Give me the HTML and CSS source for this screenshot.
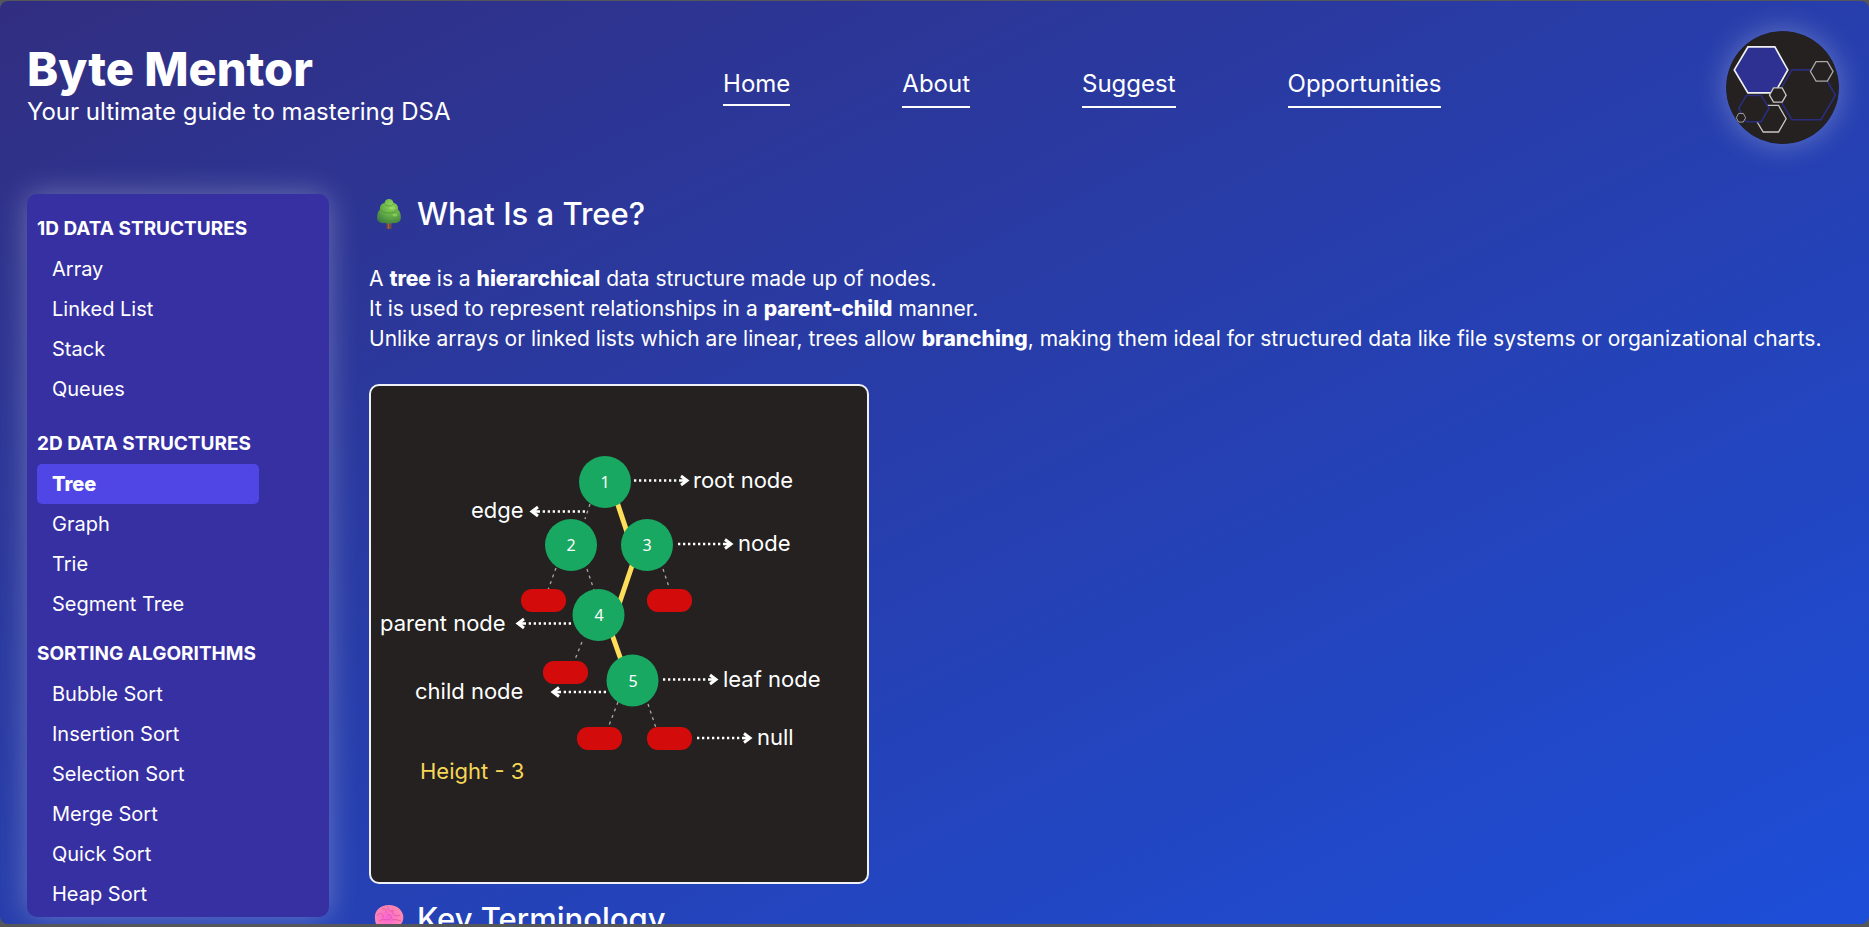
FILE: index.html
```html
<!DOCTYPE html>
<html lang="en">
<head>
<meta charset="utf-8">
<title>Byte Mentor</title>
<link rel="stylesheet" href="styles.css">
</head>
<body>
<div class="app">
  <header class="header">
    <div class="brand">
      <h1 class="brand-name">Byte Mentor</h1>
      <p class="brand-tagline">Your ultimate guide to mastering DSA</p>
    </div>
    <nav class="nav">
      <a class="nav-link nav-link-current" href="#">Home</a>
      <a class="nav-link" href="#">About</a>
      <a class="nav-link" href="#">Suggest</a>
      <a class="nav-link" href="#">Opportunities</a>
    </nav>
    <svg class="logo" viewBox="137 93 340 340" role="img" aria-label="Byte Mentor logo">
      <circle cx="307" cy="263" r="170" fill="#242120"/>
      <g fill="#242120" stroke-width="5">
        <polygon points="335,210 423,210 466,286 423,360 335,360 291,286" stroke="#292d7c"/>
        <polygon points="225,357 249,317 295,317 318,357 295,397 249,397" stroke="#c6c6c4" stroke-width="4"/>
        <polygon points="175,326 198,287 243,287 266,326 243,366 198,366" stroke="#292d7c"/>
        <polygon points="162,210 203,141 284,141 323,210 284,279 203,279" fill="#2e3192" stroke="#f0f0f4"/>
        <polygon points="391,215 408,185 442,185 459,215 442,244 408,244" stroke="#aaa9a8" stroke-width="4"/>
        <polygon points="268,286 280,264 306,264 318,286 306,307 280,307" stroke="#c6c6c4" stroke-width="4"/>
        <polygon points="168,354 175,341 189,341 196,354 189,367 175,367" stroke="#a0a09e" stroke-width="3"/>
      </g>
    </svg>
  </header>

  <div class="layout">
    <aside class="sidebar">
      <div class="menu">
        <section class="menu-group">
          <h2 class="menu-title">1D DATA STRUCTURES</h2>
          <a class="menu-item" href="#">Array</a>
          <a class="menu-item" href="#">Linked List</a>
          <a class="menu-item" href="#">Stack</a>
          <a class="menu-item" href="#">Queues</a>
        </section>
        <section class="menu-group menu-group-spaced">
          <h2 class="menu-title">2D DATA STRUCTURES</h2>
          <a class="menu-item menu-item-active" href="#">Tree</a>
          <a class="menu-item" href="#">Graph</a>
          <a class="menu-item" href="#">Trie</a>
          <a class="menu-item" href="#">Segment Tree</a>
        </section>
        <section class="menu-group">
          <h2 class="menu-title">SORTING ALGORITHMS</h2>
          <a class="menu-item" href="#">Bubble Sort</a>
          <a class="menu-item" href="#">Insertion Sort</a>
          <a class="menu-item" href="#">Selection Sort</a>
          <a class="menu-item" href="#">Merge Sort</a>
          <a class="menu-item" href="#">Quick Sort</a>
          <a class="menu-item" href="#">Heap Sort</a>
        </section>
      </div>
    </aside>

    <main class="content">
      <h2 class="topic">
        <svg class="topic-icon" viewBox="0 0 30 32" aria-hidden="true">
          <defs>
            <radialGradient id="leaf" cx="0.6" cy="0.25" r="0.8">
              <stop offset="0" stop-color="#8fd45a"/>
              <stop offset="0.55" stop-color="#63ad45"/>
              <stop offset="1" stop-color="#3f7d43"/>
            </radialGradient>
          </defs>
          <path d="M12.500 22h5v8.500q-2.500 1-5 0z" fill="#7b4a3c"/>
          <path d="M14.500 24v7" stroke="#9c6350" stroke-width="1"/>
          <path d="M15 1C17.500 1 19 2.500 19.500 5C22.500 5.500 24.500 8 24 11.500C26.500 13.500 27.500 19 26.500 22C25.500 24.500 22 25.500 19.500 25C17 26 13 26 10.500 25C8 25.500 4.500 24.500 3.500 22C2.500 19 3.500 13.500 6 11.500C5.500 8 7.500 5.500 10.500 5C11 2.500 12.500 1 15 1z" fill="url(#leaf)"/>
          <path d="M10.500 6c2 2.500 7 3 9 0M6.500 12c4 4 13 4 17 0" fill="none" stroke="#47903d" stroke-width="1" opacity="0.7"/>
          <ellipse cx="18" cy="10" rx="3" ry="1.500" fill="#a5e56f" opacity="0.6"/>
          <ellipse cx="21" cy="17" rx="2.500" ry="1.500" fill="#a5e56f" opacity="0.5"/>
        </svg>
        What Is a Tree?
      </h2>

      <p class="intro">
        A <strong>tree</strong> is a <strong>hierarchical</strong> data structure made up of nodes.<br>
        It is used to represent relationships in a <strong>parent-child</strong> manner.<br>
        Unlike arrays or linked lists which are linear, trees allow <strong>branching</strong>, making them ideal for structured data like file systems or organizational charts.
      </p>

      <svg class="diagram" viewBox="2 2 496 496" role="img" aria-label="Parts of a tree">
        <defs>
          <g id="arrow">
            <path d="M0 0H46" stroke="#fff" stroke-width="2.600" stroke-dasharray="2.300 2.700"/>
            <path d="M47 -4.500L53 0L47 4.500" fill="none" stroke="#fff" stroke-width="3"/>
            <path d="M46 0H52" stroke="#fff" stroke-width="2.600"/>
          </g>
        </defs>
        <g stroke="#aaa8a6" stroke-width="1.300" stroke-dasharray="3 4">
          <path d="M221 120L216 135"/>
          <path d="M187 184L179 206"/>
          <path d="M218 185L225 206"/>
          <path d="M294 185L301 206"/>
          <path d="M213 258L205 278"/>
          <path d="M249 318L239 344"/>
          <path d="M279 320L287 344"/>
        </g>
        <g stroke="#ffde59" stroke-width="5">
          <path d="M246 112L262 160"/>
          <path d="M266 173L247 229"/>
          <path d="M240 242L257 290"/>
        </g>
        <g fill="#d40b0b">
          <rect x="152" y="205" width="45" height="23" rx="11"/>
          <rect x="278" y="205" width="45" height="23" rx="11"/>
          <rect x="174" y="277" width="45" height="23" rx="11"/>
          <rect x="208" y="343" width="45" height="23" rx="11"/>
          <rect x="278" y="343" width="45" height="23" rx="11"/>
        </g>
        <g fill="#19a861">
          <circle cx="236" cy="98" r="26"/>
          <circle cx="202" cy="161" r="26"/>
          <circle cx="278" cy="161" r="26"/>
          <circle cx="229.500" cy="231" r="26"/>
          <circle cx="263.500" cy="296.500" r="26"/>
        </g>
        <g class="node-number">
          <text x="236" y="104">1</text>
          <text x="202" y="167">2</text>
          <text x="278" y="167">3</text>
          <text x="230" y="237">4</text>
          <text x="264" y="303">5</text>
        </g>
        <use href="#arrow" x="265" y="96.500"/>
        <use href="#arrow" x="309" y="160"/>
        <use href="#arrow" x="294" y="295.500"/>
        <use href="#arrow" x="328" y="354"/>
        <use href="#arrow" transform="translate(216 127.500) rotate(180)"/>
        <use href="#arrow" transform="translate(202 239.500) rotate(180)"/>
        <use href="#arrow" transform="translate(237 308) rotate(180)"/>
        <g class="node-label">
          <text x="324" y="104">root node</text>
          <text x="102" y="134">edge</text>
          <text x="369" y="167">node</text>
          <text x="11" y="247">parent node</text>
          <text x="46" y="315">child node</text>
          <text x="354" y="303">leaf node</text>
          <text x="388" y="361">null</text>
          <text class="height-label" x="51" y="395">Height - 3</text>
        </g>
      </svg>

      <h2 class="topic">
        <svg class="topic-icon" viewBox="0 0 30 32" aria-hidden="true">
          <defs>
            <radialGradient id="brain" cx="0.45" cy="0.5" r="0.6">
              <stop offset="0" stop-color="#fb62d8"/>
              <stop offset="1" stop-color="#ff8fa8"/>
            </radialGradient>
          </defs>
          <path d="M1 16C0 8 6 2 15 2s16 7 14 15c-1 5-5 6-9 6-2 5-6 6-9 3-6 1-10-4-10-10z" fill="url(#brain)"/>
          <path d="M3 13c3-5 7-2 6 2M8 6c3-1 5 1 4 4M14 3c-1 5 3 6 6 4M18 8c0 4 4 6 8 4M5 18c4-3 8 0 11-2s1-5-3-4M17 17c3-1 7 0 10 1" fill="none" stroke="#d9569f" stroke-width="1" opacity="0.8"/>
        </svg>
        Key Terminology
      </h2>
    </main>
  </div>
</div>
</body>
</html>
```

FILE: styles.css
```css
* {
  box-sizing: border-box;
  margin: 0;
  padding: 0;
}

body {
  height: 100vh;
  padding: 1px 0 3px;
  overflow: hidden;
  background: #55565a;
  color: #fff;
  font-family: Inter, "Open Sans", sans-serif;
  font-size: 20px;
}

a {
  color: inherit;
  text-decoration: none;
}

.app {
  height: 100%;
  padding: 30px 27px 0;
  overflow: hidden;
  border-radius: 8px;
  background: linear-gradient(to bottom right, #312e81, #1d4ed8);
}

.header {
  display: flex;
  align-items: center;
  justify-content: space-between;
  margin-bottom: 50px;
}

.brand-name {
  font-size: 47px;
  font-weight: 800;
  line-height: 48px;
}

.brand-tagline {
  font-size: 24px;
  line-height: 38px;
}

.nav {
  display: flex;
  align-items: flex-start;
  gap: 112px;
  margin-right: 12px;
}

.nav-link {
  padding-bottom: 5px;
  border-bottom: 2px solid #fff;
  font-size: 24px;
  line-height: 34px;
}

.nav-link-current {
  padding-bottom: 3px;
}

.logo {
  width: 113px;
  height: 113px;
  margin-right: 3px;
  border-radius: 50%;
  box-shadow: 0 0 30px rgba(255, 255, 255, 0.3);
}

.layout {
  display: flex;
  align-items: flex-start;
  gap: 40px;
}

.sidebar {
  flex: 0 0 302px;
  padding: 15px 10px 3px;
  border-radius: 10px;
  background: #3730a3;
  box-shadow: 0 0 30px rgba(255, 255, 255, 0.3);
}

.menu {
  display: flex;
  flex-direction: column;
  gap: 10px;
  width: 222px;
}

.menu-group {
  display: flex;
  flex-direction: column;
}

.menu-group-spaced {
  padding-top: 5px;
}

.menu-title {
  font-size: 19px;
  font-weight: 700;
  line-height: 40px;
  white-space: nowrap;
}

.menu-item {
  padding-left: 15px;
  border-radius: 5px;
  font-size: 20px;
  line-height: 40px;
}

.menu-item-active {
  background: #4f46e5;
  font-weight: 800;
}

.content {
  flex: 1;
  min-width: 0;
}

.topic {
  display: flex;
  align-items: center;
  gap: 13px;
  padding-left: 5px;
  font-size: 31px;
  font-weight: 500;
  line-height: 40px;
}

.topic-icon {
  width: 30px;
  height: 32px;
}

.intro {
  margin: 30px 0;
  font-size: 21px;
  line-height: 30px;
}

.intro strong {
  font-weight: 800;
}

.diagram {
  display: block;
  width: 500px;
  max-width: 100%;
  margin-bottom: 15px;
  border: 2px solid #eef0f6;
  border-radius: 10px;
  background: #242120;
}

.node-number {
  fill: #fff;
  font-family: "Noto Sans", sans-serif;
  font-size: 16px;
  text-anchor: middle;
}

.node-label {
  fill: #fff;
  font-size: 22px;
}

.height-label {
  fill: #f7d757;
}
```
